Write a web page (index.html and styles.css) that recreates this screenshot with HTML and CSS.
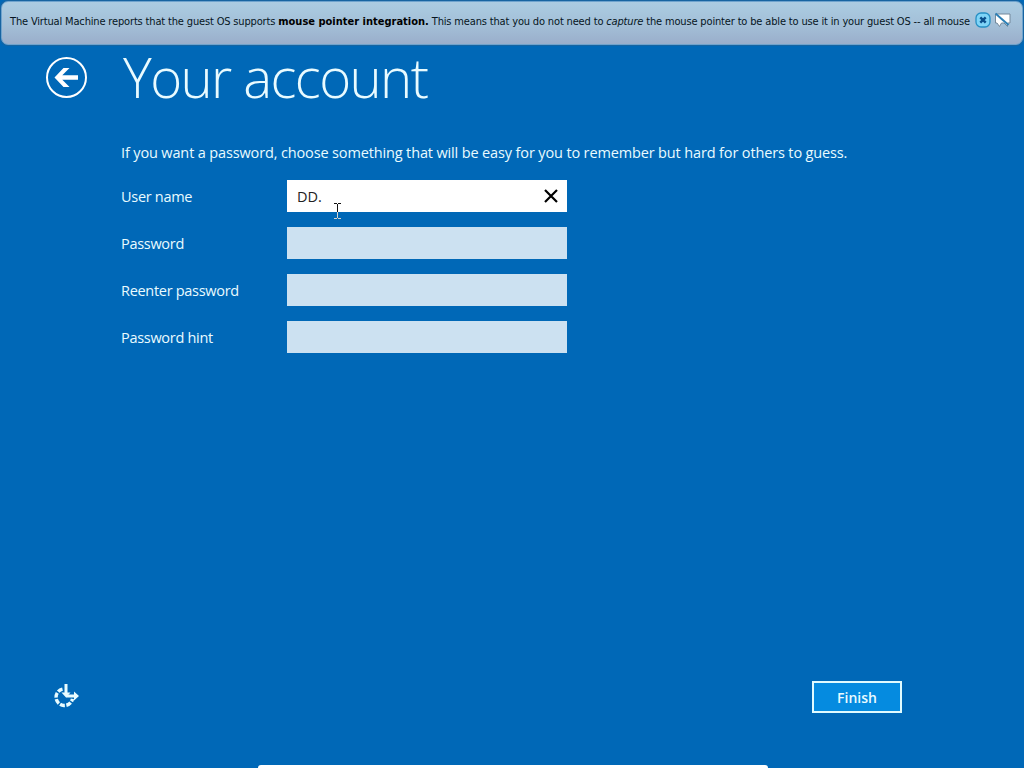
FILE: index.html
```html
<!DOCTYPE html>
<html lang="en">
<head>
    <meta charset="UTF-8">
    <title>Your account</title>
    <link rel="stylesheet" href="styles.css">
</head>
<body>
    <div class="vm-bar">
        <p class="vm-message">The Virtual Machine reports that the guest OS supports <b>mouse pointer integration.</b> This means that you do not need to <i>capture</i> the mouse pointer to be able to use it in your guest OS -- all mouse</p>
        <svg class="vm-close" width="16" height="16" viewBox="0 0 16 16">
            <rect x="1" y="1" width="14" height="14" rx="5" fill="#7fd4f7" stroke="#258fc4" stroke-width="1.3"/>
            <path d="M5.300 5.300l5.400 5.400M10.700 5.300l-5.400 5.400" stroke="#0b4f8b" stroke-width="2.400"/>
        </svg>
        <svg class="vm-mute" width="18" height="16" viewBox="0 0 18 16">
            <path d="M1.500 2h14.500v9h-2.500v3.500l-3.500-3.500h-2.500l-2 3.500-2.500-3.500h-1.500z" fill="#fff" stroke="#75899b"/>
            <path d="M1.500 1.500l13 11.500" stroke="#2c7fb5" stroke-width="2"/>
        </svg>
    </div>
    <header class="page-header">
        <svg class="back" width="42" height="42" viewBox="0 0 42 42">
            <circle cx="21.500" cy="20.500" r="19.500" fill="none" stroke="#fff" stroke-width="2"/>
            <path d="M9.500 20.500l9-9.500h6l-7.200 7.300h15.700v4.400h-15.700l7.200 7.300h-6z" fill="#fff"/>
        </svg>
        <h1>Your account</h1>
    </header>
    <main>
        <p class="intro">If you want a password, choose something that will be easy for you to remember but hard for others to guess.</p>
        <div class="row">
            <span class="label">User name</span>
            <div class="field active">
                <span>DD.</span>
                <svg width="14" height="14" viewBox="0 0 14 14"><path d="M1 1l12 12M13 1L1 13" stroke="#000" stroke-width="2.200"/></svg>
                <!-- text cursor -->
                <svg class="cursor" width="7" height="16" viewBox="0 0 7 16">
                    <path d="M0 .5h3M4 .5h3M3.500 1v9" stroke="#111" fill="none"/>
                    <path d="M3.500 9v6M0 15.500h3M4 15.500h3" stroke="#d8d3cc" fill="none"/>
                </svg>
            </div>
        </div>
        <div class="row"><span class="label">Password</span><div class="field"></div></div>
        <div class="row"><span class="label">Reenter password</span><div class="field"></div></div>
        <div class="row"><span class="label">Password hint</span><div class="field"></div></div>
    </main>
    <footer>
        <svg class="ease" width="26" height="26" viewBox="0 0 26 26">
            <!-- ring is open at the top right, where the arrows meet -->
            <path d="M9.500 5.100a8.300 8.300 0 1 0 10 9.700" fill="none" stroke="#e8fcff" stroke-width="3.400" stroke-dasharray="5 1.500"/>
            <path d="M11.500 0h3v8.500h3l-4.500 5-4.500-5h3z" fill="#e8fcff"/>
            <path d="M13 10.500h8v-3l5 4.500-5 4.500v-3h-8z" fill="#e8fcff"/>
        </svg>
        <button class="finish">Finish</button>
    </footer>
    <div class="bottom-panel"></div>
</body>
</html>
```
FILE: styles.css
```css
* {
    box-sizing: border-box;
}
body {
    margin: 0;
    height: 768px;
    overflow: hidden;
    background: #0068b7;
    color: #e9fbff;
    font-family: "Open Sans", "Noto Sans", sans-serif;
    font-size: 14.5px;
    display: flex;
    flex-direction: column;
}
p, h1 {
    margin: 0;
}
svg {
    flex: none;
}
.vm-bar {
    height: 44px;
    margin: 1px 1px 0;
    padding: 10px 10px 0 8px;
    border: 1px solid #6fa3cd;
    border-radius: 7px;
    background: linear-gradient(#abcce2, #a3bfd7 55%, #9aaecb);
    box-shadow: 0 0 0 1px #1764a1;
    display: flex;
    align-items: flex-start;
    flex: none;
}
.vm-message {
    width: 965px;
    padding-top: 1px;
    color: #061522;
    font: 11px/18px "DejaVu Sans Condensed", "DejaVu Sans", sans-serif;
    font-stretch: condensed;
    letter-spacing: -0.16px;
    white-space: nowrap;
}
.vm-message b {
    color: #000;
    letter-spacing: 0;
}
.vm-close {
    margin-right: 3px;
}
.page-header {
    display: flex;
    height: 95px;
    padding: 12px 0 0 45px;
    gap: 36px;
    flex: none;
}
.page-header h1 {
    margin-top: -17px;
    font-size: 54.5px;
    line-height: 75px;
    font-weight: 300;
    letter-spacing: -1.6px;
}
main {
    padding: 0 0 0 121px;
}
.intro {
    height: 40px;
    line-height: 26px;
    white-space: nowrap;
    letter-spacing: -0.14px;
}
.row {
    display: flex;
    align-items: center;
    height: 32px;
    margin-bottom: 15px;
}
.label {
    width: 166px;
    letter-spacing: -0.3px;
}
.field {
    position: relative;
    display: flex;
    align-items: center;
    justify-content: space-between;
    width: 280px;
    height: 32px;
    padding: 0 9px 0 10px;
    background: #cce1f1;
}
.field.active {
    background: #fff;
    color: #222;
}
.cursor {
    position: absolute;
    left: 47px;
    top: 23px;
}
footer {
    display: flex;
    justify-content: space-between;
    align-items: center;
    height: 32px;
    margin-top: auto;
    padding: 0 122px 0 53px;
}
.finish {
    width: 90px;
    height: 32px;
    padding: 0;
    border: 2px solid #e0fbff;
    background: #058be0;
    color: #e9fbff;
    font: 600 14px "Open Sans", sans-serif;
}
.bottom-panel {
    flex: none;
    width: 510px;
    height: 3px;
    margin: 52px 0 0 258px;
    border-radius: 6px 6px 0 0;
    background: #fff;
}
```
